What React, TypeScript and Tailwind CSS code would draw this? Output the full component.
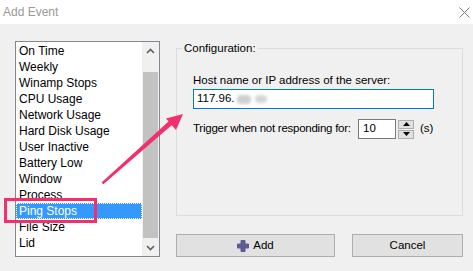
import React from "react";

const events = [
  "On Time",
  "Weekly",
  "Winamp Stops",
  "CPU Usage",
  "Network Usage",
  "Hard Disk Usage",
  "User Inactive",
  "Battery Low",
  "Window",
  "Process",
  "Ping Stops",
  "File Size",
  "Lid",
];

const selected = "Ping Stops";

function ScrollBar() {
  return (
    <div className="flex h-full w-[17px] flex-col bg-[#f0f0f0]">
      <div className="flex h-[17px] items-center justify-center">
        <svg width="9" height="6" viewBox="0 0 9 6">
          <path d="M1 5 L4.5 1.5 L8 5" fill="none" stroke="#606060" strokeWidth="1.6" />
        </svg>
      </div>
      <div className="mx-[1px] mt-[13px] mb-[1px] flex-1 bg-[#c2c2c2]" />
      <div className="flex h-[17px] items-center justify-center">
        <svg width="9" height="6" viewBox="0 0 9 6">
          <path d="M1 1 L4.5 4.5 L8 1" fill="none" stroke="#606060" strokeWidth="1.6" />
        </svg>
      </div>
    </div>
  );
}

function EventList() {
  return (
    <div className="flex h-[216px] w-[145px] border border-[#828790] bg-white">
      <div className="flex flex-1 flex-col pt-[1px]">
        {events.map((name) => (
          <div
            key={name}
            className={
              name === selected
                ? "h-[16px] border border-dotted border-white bg-[#3399ff] pl-[2px] leading-[14px] text-white"
                : "h-[16px] pl-[3px] leading-[16px] text-black"
            }
          >
            {name}
          </div>
        ))}
      </div>
      <ScrollBar />
    </div>
  );
}

function SpinBox() {
  return (
    <div className="flex items-center">
      <div className="flex h-[20px] w-[38px] items-center border border-[#7a7a7a] bg-white pl-[4px]">10</div>
      <div className="ml-[2px] flex flex-col gap-[1px]">
        <div className="flex h-[9px] w-[16px] items-center justify-center border border-[#adadad] bg-[#e1e1e1]">
          <svg width="7" height="4" viewBox="0 0 7 4">
            <path d="M0 4 L3.5 0 L7 4 Z" fill="#000" />
          </svg>
        </div>
        <div className="flex h-[9px] w-[16px] items-center justify-center border border-[#adadad] bg-[#e1e1e1]">
          <svg width="7" height="4" viewBox="0 0 7 4">
            <path d="M0 0 L3.5 4 L7 0 Z" fill="#000" />
          </svg>
        </div>
      </div>
      <span className="ml-[6px]">(s)</span>
    </div>
  );
}

function Configuration() {
  return (
    <div className="relative mt-[7px] h-[168px] w-[287px] border border-[#dcdcdc] px-[16px] pt-[23px]">
      <span className="absolute -top-[9px] left-[5px] bg-[#f0f0f0] px-[2px] leading-[16px]">Configuration:</span>
      <div className="whitespace-nowrap leading-[16px]">Host name or IP address of the server:</div>
      <div className="mt-[1px] flex h-[20px] w-[241px] items-center border border-[#0078d7] bg-white pl-[3px]">
        <span>117.96.</span>
        <span className="ml-[2px] h-[9px] w-[14px] rounded-sm bg-[#cfcfcf] blur-[1.5px]" />
        <span className="ml-[4px] h-[8px] w-[12px] rounded-sm bg-[#d6d6d6] blur-[1.5px]" />
      </div>
      <div className="mt-[10px] flex items-center">
        <span className="w-[165px] whitespace-nowrap tracking-[-0.25px]">Trigger when not responding for:</span>
        <SpinBox />
      </div>
    </div>
  );
}

function Buttons() {
  return (
    <div className="mt-[18px] flex gap-[17px]">
      <button className="flex h-[23px] w-[159px] items-center justify-center border border-[#adadad] bg-[#e1e1e1]">
        <svg width="12" height="12" viewBox="0 0 12 12" className="mr-[4px]">
          <path d="M4 0.5 H8 V4 H11.5 V8 H8 V11.5 H4 V8 H0.5 V4 H4 Z" fill="#5f5b92" strokeLinejoin="round" stroke="#5f5b92" strokeWidth="1" />
        </svg>
        Add
      </button>
      <button className="flex h-[23px] w-[111px] items-center justify-center border border-[#adadad] bg-[#e1e1e1]">
        Cancel
      </button>
    </div>
  );
}

function Annotation() {
  return (
    <svg className="pointer-events-none absolute left-0 top-0" width="473" height="271" viewBox="0 0 473 271">
      <rect x="5.5" y="199.5" width="90" height="22" fill="none" stroke="#f2306e" strokeWidth="3" />
      <polygon points="101.5,182.5 103.3,184.2 172.5,124.5 169.3,120.8" fill="#f2306e" />
      <polygon points="183,114 166,118.6 176,130" fill="#f2306e" />
    </svg>
  );
}

export default function App() {
  return (
    <div className="relative flex h-[271px] w-[473px] flex-col overflow-hidden bg-[#f0f0f0] text-[12px] text-black [font-family:'Liberation_Sans',Arial,sans-serif]">
      <div className="flex h-[24px] items-center justify-between bg-white pl-[3px] pr-[3px]">
        <span className="text-[12px] text-[#9a9a9a]">Add Event</span>
        <svg width="11" height="11" viewBox="0 0 11 11">
          <path d="M0.5 0.5 L10.5 10.5 M10.5 0.5 L0.5 10.5" stroke="#777" strokeWidth="1" />
        </svg>
      </div>
      <div className="flex flex-1 pl-[15px] pt-[17px]">
        <EventList />
        <div className="ml-[16px] flex flex-col text-[11.5px]">
          <Configuration />
          <Buttons />
        </div>
      </div>
      <Annotation />
    </div>
  );
}
